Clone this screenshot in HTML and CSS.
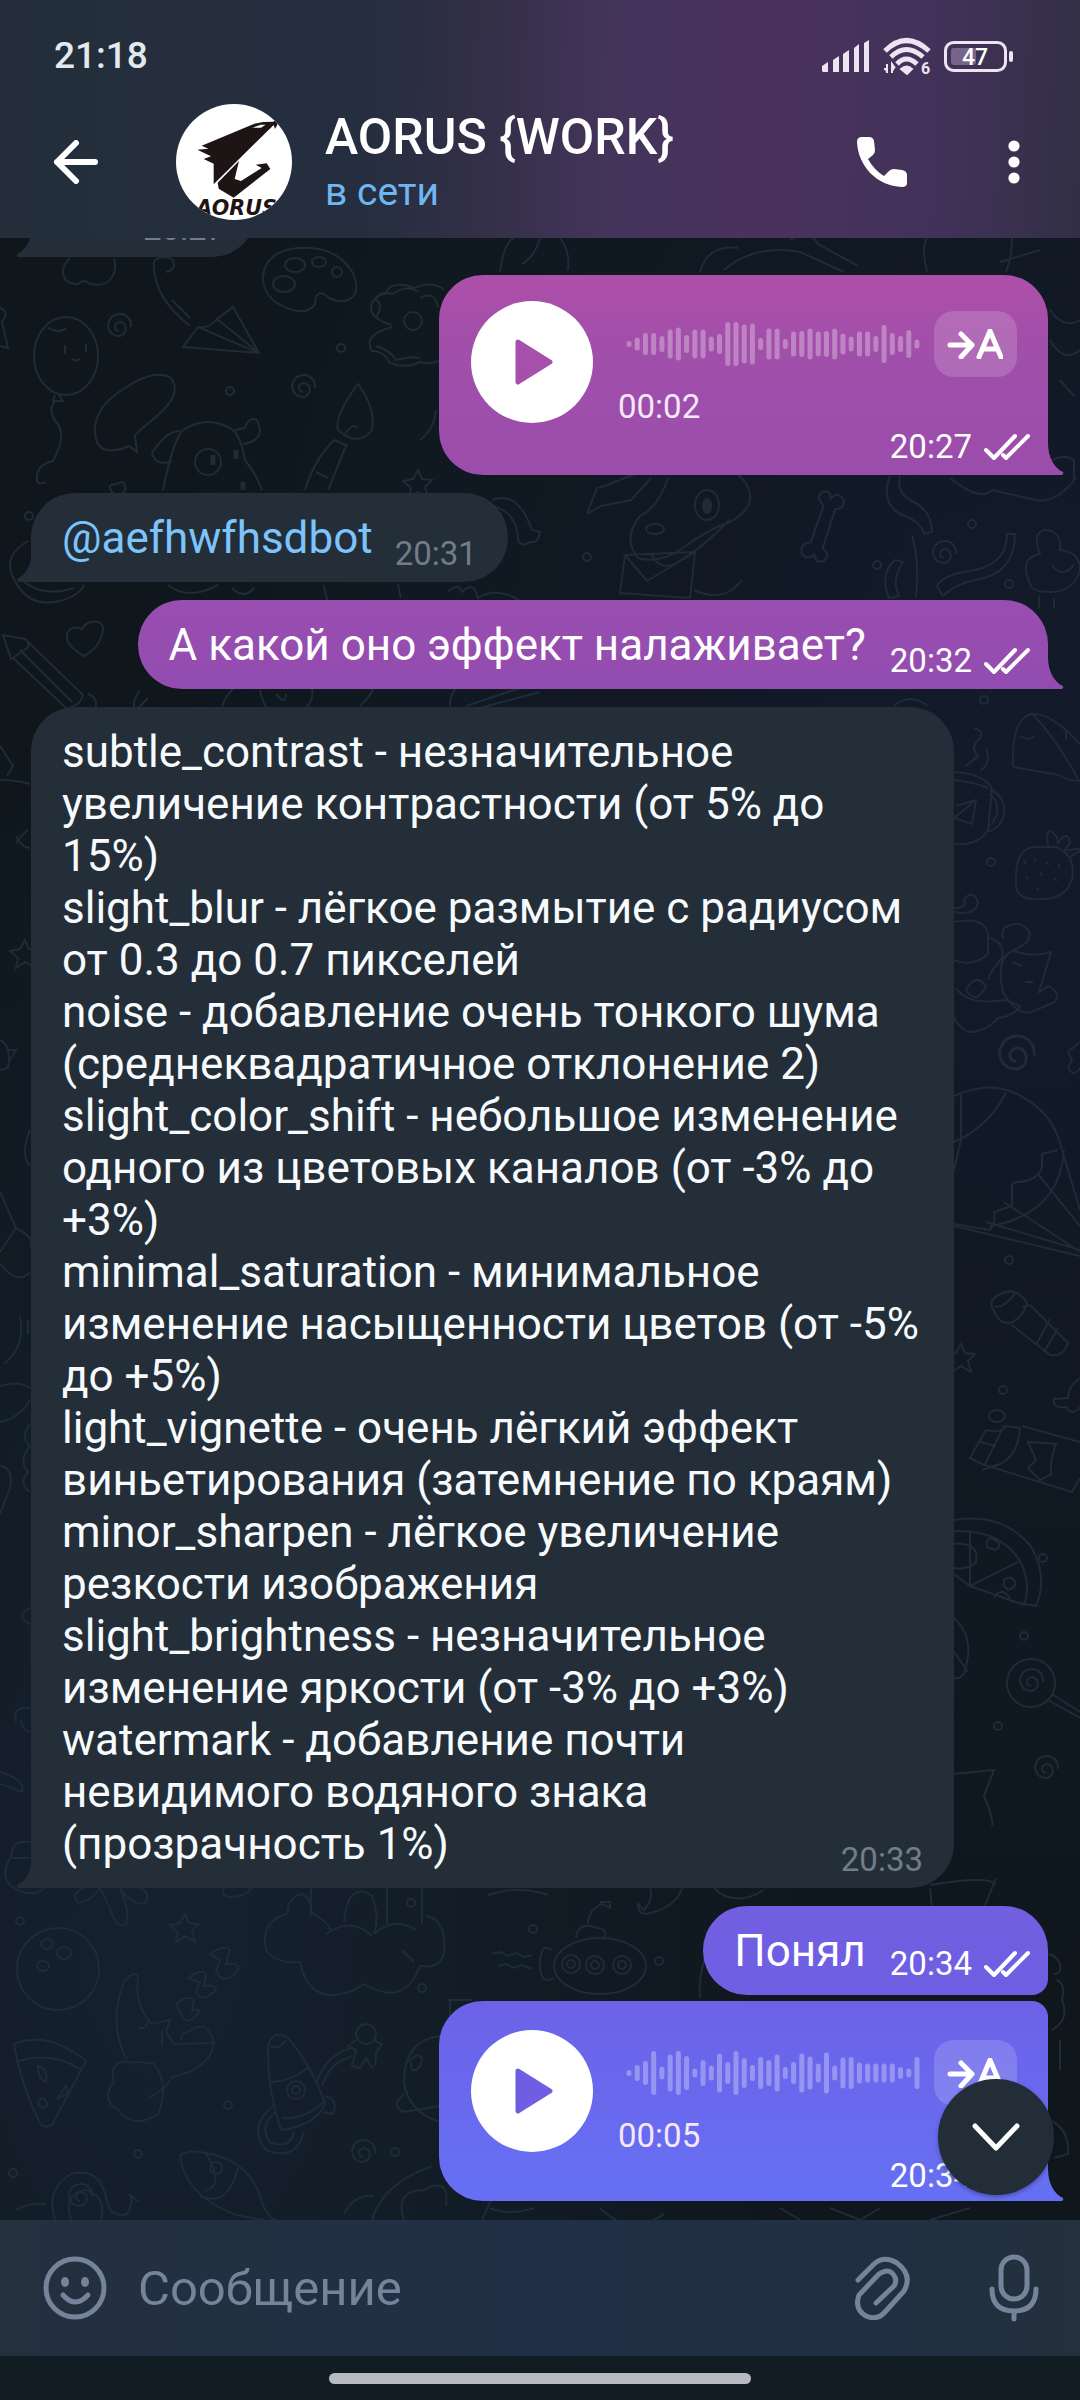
FILE: index.html
```html
<!DOCTYPE html>
<html lang="ru">
  <head>
    <meta charset="UTF-8" />
    <meta name="viewport" content="width=device-width, initial-scale=1.0" />
    <title>AORUS {WORK}</title>
    <link rel="stylesheet" href="styles.css">
  </head>
  <body>
    <header class="header">
      <!-- Status bar -->
      <div class="status">
        <span class="clock">21:18</span>
        <div class="indicators">
          <svg width="48" height="34" viewBox="0 0 48 34" fill="#ece4f0">
            <path d="M0 32v-5l6-4v10h-5zM11 33V21l6-4v16zM21 33V15l6-4v22zM32 33V9l5-4v28zM42 33V4l5-3v32z" />
          </svg>
          <svg width="48" height="38" viewBox="0 0 48 38">
            <g fill="none" stroke="#ece4f0" stroke-width="5">
              <path d="M2 14Q23-7 46 14" />
              <path d="M8 20Q23 5 40 20" />
              <path d="M14 27Q23 17 34 27" />
            </g>
            <path d="M18 32q6-5 11 0l-5 5zM4 27v9M1 32h3v4M9 36v-9l3 4" fill="#ece4f0" stroke="#ece4f0" stroke-width="2" />
            <text x="38" y="37" class="wifi-text">6</text>
          </svg>
          <svg width="70" height="32" viewBox="0 0 70 32">
            <rect x="1.5" y="2.500" width="60" height="28" rx="8" fill="none" stroke="#ece4f0" stroke-width="3" />
            <rect x="7" y="8" width="25" height="17" rx="3" fill="#76648a" />
            <rect x="65" y="11" width="4" height="11" rx="2" fill="#ece4f0" />
            <text x="31" y="25" class="battery-text">47</text>
          </svg>
        </div>
      </div>

      <!-- Chat toolbar -->
      <div class="toolbar">
        <button class="icon-btn" aria-label="Назад">
          <svg width="44" height="44" viewBox="0 0 44 44" fill="none" stroke="#fff" stroke-width="6" stroke-linecap="round" stroke-linejoin="round">
            <path d="M22 3L3 22l19 19M3 22h38" />
          </svg>
        </button>
        <svg class="avatar" viewBox="33 27 348 348">
          <rect x="33" y="27" width="348" height="348" fill="#fff" />
          <g fill="#1d1416">
            <path d="M110 152L268 86 294 81 324 80 335 75 337 89 330 102 326 90 217 197 146 268V206L116 192 138 184 97 164 130 161z" />
            <path d="M222 198L209 252 228 258 290 219 272 209 305 205 316 222 206 308 161 281 158 263z" />
          </g>
          <path d="M262 98l26-9h14l-14 9z" fill="#fff" />
          <text x="94" y="359" class="avatar-text">AORUS</text>
        </svg>
        <div class="peer">
          <h1>AORUS {WORK}</h1>
          <p>в сети</p>
        </div>
        <button class="icon-btn call" aria-label="Позвонить">
          <svg width="50" height="50" viewBox="0 0 50 50" fill="#fff">
            <path d="M5 0h7q4 0 5 4l1 9q0 3-2 5l-5 4q6 11 16 17l5-5q2-2 5-2l8 1q5 1 5 5v8q0 4-5 4C20 49 1 29 0 5Q0 0 5 0z" />
          </svg>
        </button>
        <button class="icon-btn" aria-label="Меню">
          <svg width="12" height="44" viewBox="0 0 12 44" fill="#fff">
            <circle cx="6" cy="6" r="5.600" /><circle cx="6" cy="22" r="5.600" /><circle cx="6" cy="38" r="5.600" />
          </svg>
        </button>
      </div>
    </header>

    <main class="chat">
      <!-- Wallpaper -->
      <svg class="wallpaper" viewBox="0 238 1080 1982" preserveAspectRatio="xMidYMin slice" aria-hidden="true">
        <defs>
          <path id="spiral" d="M0 3q-5-1-4-6 5-6 10 0 3 8-5 11-11 0-12-11 2-12 14-11 10 3 9 13" />
          <path id="star" d="M0-14l4 9 10 1-7 7 3 11-10-6-9 6 2-10-8-7 10-2z" />
          <circle id="dot" r="4" />
          <path id="bone" d="M-5-22q-10-6-4-13 8-4 9 5 6-9 13-2 4 9-6 11L3 20q9 4 4 12-8 5-11-4-6 8-13 1-3-10 7-12z" />
        </defs>
        <!-- top left -->
        <path d="M70 258c-12 12-8 26 8 26q6-6 12 0c20 4 28-10 24-26M0 308q10 4 2 14l6 26-8-2" />
        <ellipse cx="66" cy="356" rx="32" ry="39" />
        <path d="M48 328q12 6 18 0M65 345v9M86 344v8M72 359q4 3 8 0M55 395l-2 6h10l-4-6M55 401q-8 10 2 22t-4 38q-18 4-16 20q2 4 9 1" />
        <use href="#spiral" x="119" y="328" />
        <path d="M190 326q-38-30-36-64 6-8 18-3 6 10-6 13M172 300l18 18" />
        <path d="M198 327l-15 20 76 6-26-46-16 12q-8 10-19 8zM198 327l61 26-42-34" />
        <path d="M263 280c0-30 30-33 48-32 30 2 50 26 44 46q-8 12-26 4c-10-10-14-2-14 6q-6 10-22 6-28-8-30-30z" />
        <ellipse cx="295" cy="265" rx="10" ry="7" /><ellipse cx="319" cy="262" rx="7" ry="5" /><circle cx="337" cy="272" r="5" /><ellipse cx="284" cy="284" rx="11" ry="8" />
        <path d="M392 325c-30-8-24-28-6-32 4-12 20-8 28-5q20-8 30 2M376 318q8-14 0-18 4-10 16-6 16-10 26-2M392 327q-30 8-20 24 12 0 18 12 16 6 30-1 14 4 24-5M376 346q14 4 20 14 14-4 24-2" />
        <circle cx="413" cy="321" r="9" />
        <path d="M358 384q-24 32-20 46 20 18 34 0 4-22-14-46zM344 436q8-14 14-8M334 440l14 6M334 440q-20 20-29 50M346 446l-18 44M316 472l12 6" />
        <use href="#spiral" x="303" y="389" />
        <path d="M95 430q0-24 30-42 30-20 46-10 12 16-14 38-22 18-22 20l2 16-8-6q-34 14-34-16z" />
        <path d="M163 490q10-50 20-60 25-16 50 0 8 8 12 30 10 12 17 30M180 431q-14 0-28 22 4 14 20 8M235 430l10-2q4-12 12-8 10 20-14 24" />
        <circle cx="208" cy="462" r="13" /><path d="M213 455v10M236 450v9M243 490v-8" stroke-width="5" />
        <use href="#star" x="418" y="484" /><path d="M112 492q-6-8 5-8 6-5 8 2 2 6-7 10z" />
        <use href="#dot" x="230" y="391" /><use href="#dot" x="341" y="348" /><use href="#dot" x="29" y="516" />
        <!-- top right -->
        <path d="M500 272q4-30 14-34M560 238q10 12 8 32M700 272q8-28 38-24M724 270q30-26 76-18l44 20M790 240q20-12 28 4l40 22M927 272q-6-24 0-34M1000 262l40-12M1012 238q0 20 -6 34M540 238q-6 20-18 26" />
        <path d="M1050 310q14 20 30 10M1050 340q14 24 30 10M1060 380l14 16M420 298q16-8 18 10M420 440q14-10 16-30" />
        <!-- around the bot link -->
        <path d="M12 575q-8-20 16-34M12 575q14 34 48 26 20-6 24-16M22 580q20 18 52 8M168 585q20 16 50 0M232 588q12 12 22 0M324 585q4 30 16 16 8 14 30 0M398 584q4 20 2 10M448 592q10-10 14 0 12-12 16 6 20-12 44 4M492 500q26-10 40 30l8 2q-2 12-10 10-8 6-12-2 0-26-24-34" />
        <path d="M587 514l10-26 8-2 30-12M587 514l14-8 30-6 20-22" />
        <path d="M672 478q-10 30-28 38-18 22-2 42 20 6 42-8 26-20 50-28 36-20 8-48M655 554q10 20 30 6 24-14 48-40" transform="translate(-4 0)" />
        <ellipse cx="707" cy="505" rx="12" ry="15" /><ellipse cx="707" cy="506" rx="4" ry="7" class="filled" /><ellipse cx="655" cy="529" rx="9" ry="5" />
        <path d="M625 555l70-3-5 46-70-5zM625 555l22 26 48-29M694 590q30 14 48-10" />
        <use href="#bone" transform="translate(824 528) rotate(12)" />
        <path d="M890 476q-10 26 10 38 22 8 24 20l8-2q0-22-22-32-14-8-10-24M950 478q30 24 42 12l44 10q20 4 40-22M1040 470q20-20 34-10v20" />
        <path d="M895 560q-16 14-6 38l10-2q-8-16 4-34zM912 535q8 30 4 62M1007 534h8q0 40-40 46-20 4-32 16l-6-10q6-10 26-14 44-4 44-38z" />
        <use href="#spiral" x="944" y="555" />
        <path d="M1030 584q-12-26 10-30-8-20 4-24 18 0 16 20 20 2 20 20-6 22-30 22-18 0-20-8zM1052 565q10 14 22 0M1039 596v12M1054 598v10" />
        <use href="#dot" x="587" y="557" /><use href="#dot" x="972" y="524" /><use href="#dot" x="877" y="565" /><use href="#dot" x="1009" y="584" />
        <!-- pencil and heart -->
        <path d="M3 635l22 4q8 6-2 12l-12 8zM25 639l58 56q-2 10-16 14L13 658M20 650l52 52M88 694q12 4 6 18M84 656c-30-16-14-34-2-27 4-10 26-12 20 6q-4 14-18 21z" />
        <path d="M140 690q-10 14-4 20l12-12M222 706q6-14 14-20M260 690q4 26 26 26 30-4 26-30M276 694q10 12 10 0M360 706q20-20 8-18M450 706q0-16 10-20M466 706l60-20M480 708l60-16" />
        <path d="M0 746l13 20-6 10M0 780q16 0 30 4M16 836q6 12 14 12M28 830q-8 6-12 14" />
        <!-- right column -->
        <path d="M894 706q16-14 34 0M974 728q12 4 4 12t0 16l-12 10M986 749q6 14-6 22M954 772q30 2 38 16l-4 42q-10 16-34 14M954 780q20 2 34 8M990 789q16 8 14 26-6 16-16 16M989 794q10 6 8 20-4 10-8 12M956 806l20-6-4 24-18-6 22-18" />
        <path d="M1013 766q-2-46 18-52 20-2 49 30M1033 715q24 24 46 66-10 0-20-6l-46-8M1020 736q8 6 14 0M1066 730v10" />
        <path d="M1016 885q-2-36 18-38h22q20 8 16 32-6 20-30 20-26 2-26-14zM1048 845q-2-14 2-14 8 4 8 12 10-14 12 0l-6 8q20-4 16 0l-10 6M1024 860l2 4M1034 858l2 3M1046 862l3 3M1058 864l2 4M1026 876l2 3M1040 872l2 4M1054 878l3 3M1036 888l3 2" />
        <path d="M954 908q14 0 10-8 8-12 14 2-2 14-24 10M954 922q30-6 34 12v20q-16 14-34 6M990 938q16 6 12 20-12 14-14 22M1003 938q-4-14 16-14 16 6 8 18l-12 8q-20 6-12 42 14 24 28 20l24-10q6-8-6-16l-10 6 12-40q-22 6-38-2M1012 962l10 4M1025 982h8M956 988q12 18 50 12l14 6q-6 10-22 12-12 14-30 14-18-10-14-26M966 990q10-18 20-4-10 20-20 4z" />
        <use href="#spiral" transform="translate(1016 1057) scale(1.5)" />
        <path d="M1080 1042l-12 10 4 8-4 8q6 10 12 0" />
        <path d="M954 1096q40-18 70 2 30 16 38 52l18 60M954 1142q36-16 52-50M961 1094v46l-7 30M1058 1150l-16 4v14q-6 14-26 14l-4 2v22l-18 6q2 10-4 18l-36-6M954 1226q50 12 126 30M990 1226q70-12 74-76M1038 1174l42 52M1004 1202l76 50M986 1222l94 28" />
        <path d="M993 1309q-6-10 10-16 14-6 24 10-4 14-16 20-12 2-18-14zM995 1306q6 4 20-12M1012 1325l38 30q14 2 18-12l-38-38-8 2M1036 1345l14-26M1044 1352l14-24" />
        <use href="#star" x="961" y="1358" /><path d="M1080 1378q-12 8-12 20l-14 1q-2 10 12 8 6 10 14 0" />
        <ellipse cx="997" cy="1416" rx="8" ry="6" />
        <path d="M986 1430l-16 28 12 6 90 28 8-14M1022 1426l58 16M986 1430q14 4 20-4l14 2q-2 28-20 36l-18 6M1028 1442l28 2q-8 24-4 30l-12 6-12-12 8-8zM980 1442l16 4M1004 1426l-20 40" />
        <path d="M954 1520q50-8 78 28 16 30 4 58l-16-3M954 1531q46-2 66 30 12 24 4 44l-54-19-16-12M970 1530v56l48-24M954 1544q26-2 22 18-8 8-22 6M988 1548q-4-8 4-10 12 6 4 12zM1004 1586q-2-10 8-8 8 8-4 12zM994 1598q8-14 18 4" />
        <path d="M954 1618q20 18 12 48-2 14-12 12M954 1652l14 20" />
        <circle cx="1031" cy="1683" r="24" /><use href="#spiral" x="1031" y="1683" /><path d="M1048 1700l32 18M1052 1694l28 18" />
        <use href="#spiral" x="1046" y="1770" /><path d="M954 1774l40-4-10 26q10 24 8 30M930 1885q60-10 66 0" />
        <use href="#dot" x="984" y="700" /><use href="#dot" x="991" y="862" /><use href="#dot" x="1009" y="1260" /><use href="#dot" x="1003" y="1390" /><use href="#dot" x="1043" y="1558" /><use href="#dot" x="1024" y="1636" /><use href="#dot" x="998" y="1726" />
        <!-- left column -->
        <use href="#star" x="25" y="954" /><path d="M0 1040q12 6 8 28l-8 2M8 1050h8l-6 10M30 1130q-10 24 0 36M0 1192l16 36-16 24M16 1228q20 10 14 20M0 1264q18 22 30 8M20 1316q6 30-16 48M28 1320v14M0 1386q18-6 30 2M0 1422q20-4 30-22M30 1424q-10 14 0 22-12 14-2 26-10 12 2 20M0 1466q14 2 10 22l-10 26M30 1608q-16 8 0 16M16 1722q-4-16 14-14M20 1720q4 12 10 12M0 1772q26 8 22 20l-22-8M30 1842q-18-2-18 12-18 30 12 38 14 4 20-4M12 1858h18" />
        <!-- bottom left -->
        <path d="M84 1888q-14 6-6 14 10 2 22-14l10 20q6 22 16 16 4-14-6-36 14 20 26 14 4-10-6-14M224 1888q-4 8 6 9 14 0 22-9" />
        <use href="#star" x="185" y="1928" /><use href="#dot" x="20" y="1921" />
        <circle cx="58" cy="1969" r="41" /><ellipse cx="47" cy="1944" rx="6" ry="5" /><ellipse cx="64" cy="1953" rx="7" ry="6" /><ellipse cx="43" cy="1966" rx="6" ry="5" />
        <path d="M14 2044q34-14 72 17l-34 64q-8 4-12-2-20-40-26-79zM16 2062q34-12 66 8M38 2066q10 2 8 16-8-2-8-16zM58 2098l8-12 2 8zM38 2104q4-12 9 0-2 8-9 0z" />
        <path d="M138 1976q-4-6-14 6-16 40 2 76M138 1976q-4 30 14 48l18-4-4 12 8 12 40-1q-4 26-42 34-8 14-22 20M162 2046v-16M138 2026q6 6 10-4M182 2040q-2-6 6-8 16-12 22 2 6 6 0 10M130 2062q-22-2-16 20-14 16 4 28 16 20 40 4 12-30-4-50-22-4-24 0" />
        <path d="M210 1954q14-10 20-4l-4 14q14-2 12 6-14 16-22 2l4-12zM188 1978q14-10 18-4l-2 12q12-2 12 4-14 14-20 2l4-10zM176 2004q12-10 18-4l-2 10q10-2 6 4-12 12-16 2z" />
        <path d="M286 1914q-26 8-20 36 10 14 34 12 10 46 54 28l10-6q40 24 56-18 28 4 24-26-2-22-18-24M288 1914q-2-16 14-20 10 4 9 18 14 8 20 18M311 1888v28M344 1922q4-42 28-26 8 20 2 38M326 1934q26-18 46 2M374 1934q20-18 42-4M387 1888v36M422 1888v36M402 1950l12 12" />
        <use href="#dot" x="411" y="1903" /><use href="#dot" x="422" y="1988" /><use href="#dot" x="228" y="2105" /><use href="#dot" x="138" y="2154" /><use href="#dot" x="13" y="2173" /><use href="#dot" x="395" y="2152" />
        <path d="M268 2046q6-18 20-8 24 28 37 66-10 22-44 26-14-40-13-84zM270 2046q10 4 16-6M270 2082q20 0 38-14M282 2118q22 2 42-16M325 2096q14 4 8 18l-10-2" />
        <circle cx="296" cy="2090" r="9" /><circle cx="296" cy="2090" r="4" /><path d="M276 2104q-30 22-10 46 30 12 38-18M276 2112q-18 14-6 30 20 8 24-10M316 2084q10-30 36-36M322 2086q6-22 30-30" />
        <circle cx="366" cy="2034" r="10" /><path d="M356 2040l-8 6 8 4-4 16 8 2 6-10 6 10q4 0 4-16l6-8-8-4" />
        <path d="M440 2036q-36 4-36 46 4 30 36 40M410 2060q8-8 12-2-2 14-10 12zM404 2094q-14 12 0 18l36-6M450 2000v16M448 2000h24" />
        <use href="#spiral" x="363" y="2154" />
        <path d="M16 2210q14-8 30-6M55 2220q-10-30 16-46 30-8 36 28 4 16 20 12 8-14 2-20l10 8M71 2220q-8-26 14-30 22 6 16 30" /><use href="#spiral" x="80" y="2198" />
        <path d="M180 2155q12-6 26-2 46 8 56 50 8 18 16 18M180 2155q4 40 56 60l28 5M206 2153q20 34-2 38M238 2168q-10 40-38 28" /><circle cx="216" cy="2168" r="6" />
        <path d="M372 2220q10-36 60-54M344 2214q10-20 30-18M404 2220q-10-30 20-30 26-14 22 16M482 2220l10-22" />
        <!-- submarine -->
        <ellipse cx="600" cy="1966" rx="46" ry="28" /><circle cx="571" cy="1964" r="9" /><circle cx="595" cy="1965" r="9" /><circle cx="622" cy="1965" r="9" /><circle cx="571" cy="1964" r="4" /><circle cx="595" cy="1965" r="4" /><circle cx="622" cy="1965" r="4" />
        <path d="M576 1938q2-14 14-12l8 2q10 0 6 12M588 1924q0-14 14-20l8 4v-6l-10 0M552 1950q-12-8-12 14t14 14M492 1954l8-2 8 4 8-3 8 4 8-2M498 1966l8-2 8 4 8-3 10 4" />
        <use href="#dot" x="533" y="1929" /><use href="#dot" x="659" y="1961" />
        <path d="M488 1895q30-10 60 0M650 1888q4 10-6 22l-6-6q0 10 8 10 30-6 36-26M714 1888q20 20 50 2M930 1888l6 60q20 0 40-20l20-50M1036 1958q16-10 24 6 2 10-6 10M1056 1980q10 2 6 20 8 20-10 30M700 1998q-2-30 10-50" />
        <path d="M490 2208q20 8 44 0M600 2208q30 30 64 6M780 2208l20 12M830 2208l30 12 20-12M930 2220l40-12M1050 2120q20 10 18 34l-14 4M1060 2040v30" />
      </svg>

      <div class="messages">
        <div class="msg in">
          <span class="meta">20:27</span>
          <svg class="tail" width="16" height="32" viewBox="0 0 16 32"><path d="M0 0C0 14 6 25 15 29q1 2-1 3H0z" /></svg>
        </div>

        <div class="msg out voice pink">
          <div class="player">
            <button class="play" aria-label="Слушать">
              <svg width="40" height="48" viewBox="0 0 40 48"><path d="M4 4l32 20L4 44z" stroke-width="5" stroke-linejoin="round" /></svg>
            </button>
            <div class="track">
              <svg class="wave" width="294" height="66" viewBox="0 0 294 66" data-bars="6,13,22,22,16,29,33,18,29,29,15,20,44,44,39,41,12,31,31,10,25,26,31,25,26,31,21,15,25,25,16,38,22,16,28,9"></svg>
              <span class="duration">00:02</span>
            </div>
            <button class="transcribe" aria-label="Расшифровать">
              <svg width="56" height="30" viewBox="0 0 56 30"><path d="M3 16h22M14 5l11 11-11 12M32 28L43 2l11 26M36 20h14" /></svg>
            </button>
          </div>
          <span class="meta">20:27 <svg class="checks" width="46" height="28" viewBox="0 0 46 28"><path d="M2 17l8 8L31 3M19 22l3 3L44 3" /></svg></span>
          <svg class="tail" width="16" height="32" viewBox="0 0 16 32"><path d="M0 0C0 14 6 25 15 29q1 2-1 3H0z" /></svg>
        </div>

        <div class="msg in">
          <p><a href="#">@aefhwfhsdbot</a></p>
          <span class="meta">20:31</span>
          <svg class="tail" width="16" height="32" viewBox="0 0 16 32"><path d="M0 0C0 14 6 25 15 29q1 2-1 3H0z" /></svg>
        </div>

        <div class="msg out violet">
          <p>А какой оно эффект налаживает?</p>
          <span class="meta">20:32 <svg class="checks" width="46" height="28" viewBox="0 0 46 28"><path d="M2 17l8 8L31 3M19 22l3 3L44 3" /></svg></span>
          <svg class="tail" width="16" height="32" viewBox="0 0 16 32"><path d="M0 0C0 14 6 25 15 29q1 2-1 3H0z" /></svg>
        </div>

        <div class="msg in long">
          <p>
            subtle_contrast - незначительное увеличение контрастности (от 5% до 15%)<br />
            slight_blur - лёгкое размытие с радиусом от 0.3 до 0.7 пикселей<br />
            noise - добавление очень тонкого шума (среднеквадратичное отклонение 2)<br />
            slight_color_shift - небольшое изменение одного из цветовых каналов (от -3% до +3%)<br />
            minimal_saturation - минимальное изменение насыщенности цветов (от -5% до +5%)<br />
            light_vignette - очень лёгкий эффект виньетирования (затемнение по краям)<br />
            minor_sharpen - лёгкое увеличение резкости изображения<br />
            slight_brightness - незначительное изменение яркости (от -3% до +3%)<br />
            watermark - добавление почти невидимого водяного знака (прозрачность 1%)
          </p>
          <span class="meta">20:33</span>
          <svg class="tail" width="16" height="32" viewBox="0 0 16 32"><path d="M0 0C0 14 6 25 15 29q1 2-1 3H0z" /></svg>
        </div>

        <div class="msg out indigo first">
          <p>Понял</p>
          <span class="meta">20:34 <svg class="checks" width="46" height="28" viewBox="0 0 46 28"><path d="M2 17l8 8L31 3M19 22l3 3L44 3" /></svg></span>
        </div>

        <div class="msg out voice blue last">
          <div class="player">
            <button class="play" aria-label="Слушать">
              <svg width="40" height="48" viewBox="0 0 40 48"><path d="M4 4l32 20L4 44z" stroke-width="5" stroke-linejoin="round" /></svg>
            </button>
            <div class="track">
              <svg class="wave" width="294" height="66" viewBox="0 0 294 66" data-bars="6,16,24,44,13,37,44,34,9,26,15,39,22,44,30,16,32,26,37,12,22,39,33,19,41,15,31,32,21,19,19,19,19,12,9,32"></svg>
              <span class="duration">00:05</span>
            </div>
            <button class="transcribe" aria-label="Расшифровать">
              <svg width="56" height="30" viewBox="0 0 56 30"><path d="M3 16h22M14 5l11 11-11 12M32 28L43 2l11 26M36 20h14" /></svg>
            </button>
          </div>
          <span class="meta">20:34 <svg class="checks" width="46" height="28" viewBox="0 0 46 28"><path d="M2 17l8 8L31 3M19 22l3 3L44 3" /></svg></span>
          <svg class="tail" width="16" height="32" viewBox="0 0 16 32"><path d="M0 0C0 14 6 25 15 29q1 2-1 3H0z" /></svg>
        </div>
      </div>

      <button class="scroll-down" aria-label="Вниз">
        <svg width="48" height="30" viewBox="0 0 48 30" fill="none" stroke="#fff" stroke-width="5" stroke-linecap="round" stroke-linejoin="round"><path d="M3 4l21 22L45 4" /></svg>
      </button>
    </main>

    <!-- Message input -->
    <form class="composer">
      <button type="button" class="icon-btn" aria-label="Эмодзи">
        <svg width="64" height="64" viewBox="0 0 64 64" fill="none" stroke="#75849a" stroke-width="5" stroke-linecap="round">
          <circle cx="32" cy="32" r="29" />
          <path d="M20 39q12 14 25 0" />
          <g fill="#75849a" stroke="none"><ellipse cx="22" cy="26" rx="4" ry="5" /><ellipse cx="42" cy="26" rx="4" ry="5" /></g>
        </svg>
      </button>
      <input type="text" placeholder="Сообщение" aria-label="Сообщение" />
      <button type="button" class="icon-btn" aria-label="Прикрепить">
        <svg width="56" height="64" viewBox="0 0 56 64" fill="none" stroke="#75849a" stroke-width="5" stroke-linecap="round">
          <path d="M3 24L19 8Q29-1 42 7q16 12 7 28L30 56q-8 9-19 4-12-7-7-21L24 18q9-6 14 0 5 6 1 12L21 47" />
        </svg>
      </button>
      <button type="button" class="icon-btn mic" aria-label="Голосовое сообщение">
        <svg width="50" height="68" viewBox="0 0 50 68" fill="none" stroke="#75849a" stroke-width="5" stroke-linecap="round">
          <rect x="12" y="3" width="26" height="42" rx="13" />
          <path d="M3 35q0 22 22 22t22-22M25 57v8" />
        </svg>
      </button>
    </form>

    <footer class="navbar"><div class="handle"></div></footer>

    <script>
      // draw voice message bars
      document.querySelectorAll(".wave").forEach(function (wave) {
        const bars = wave.dataset.bars.split(",").map(Number);
        const step = (294 - 6) / (bars.length - 1);
        let d = "";

        bars.forEach(function (height, i) {
          const line = Math.max(height - 5, 1);
          d += "M" + (3 + i * step) + " " + (33 - line / 2) + "v" + line;
        });

        const path = document.createElementNS("http://www.w3.org/2000/svg", "path");
        path.setAttribute("d", d);
        wave.appendChild(path);
      });
    </script>
  </body>
</html>
```
FILE: styles.css
```css
* {
  margin: 0;
  padding: 0;
  box-sizing: border-box;
}

body {
  font-family: Roboto, "Noto Sans", sans-serif;
  height: 100vh;
  display: flex;
  flex-direction: column;
  background-color: #111c23;
  color: #fff;
  overflow: hidden;
}

button {
  border: none;
  background: none;
  cursor: pointer;
}

svg {
  display: block;
  flex: none;
}

/* header */
.header {
  background: linear-gradient(
    92deg,
    #232e3a 0%,
    #252e3f 34%,
    #322f46 44%,
    #43345a 56%,
    #4a325d 70%,
    #42325a 86%,
    #322f45 100%
  );
}

.status {
  height: 85px;
  padding: 26px 66px 0 54px;
  display: flex;
  justify-content: space-between;
  align-items: center;
}

.clock {
  font-size: 37px;
  font-weight: 500;
  color: #e3eaee;
}

.indicators {
  display: flex;
  align-items: center;
  gap: 13px;
}

.wifi-text {
  font-size: 16px;
  font-weight: 700;
  fill: #ece4f0;
}

.battery-text {
  font-size: 23px;
  font-weight: 500;
  text-anchor: middle;
  fill: #fff;
}

.toolbar {
  height: 153px;
  padding: 0 60px 0 54px;
  display: flex;
  align-items: center;
}

.icon-btn {
  flex: none;
}

.avatar {
  width: 116px;
  height: 116px;
  margin: 0 33px 0 78px;
  border-radius: 50%;
}

.avatar-text {
  font-family: "DejaVu Sans", sans-serif;
  font-size: 62px;
  font-weight: 700;
  font-style: italic;
  fill: #1d1416;
}

.peer {
  flex: 1;
  min-width: 0;
}

.peer h1 {
  font-size: 50px;
  font-weight: 500;
  line-height: 60px;
}

.peer p {
  font-size: 39px;
  line-height: 50px;
  color: #6fb6f2;
}

.call {
  margin-right: 101px;
}

/* chat */
.chat {
  position: relative;
  flex: 1;
  min-height: 0;
  overflow: hidden;
  display: flex;
  flex-direction: column;
  justify-content: flex-end;
  background:
    radial-gradient(ellipse at 95% 28%, #131a2a 0%, transparent 60%),
    radial-gradient(ellipse at 15% 85%, #15212f 0%, transparent 50%),
    #0f171d;
}

.wallpaper {
  position: absolute;
  top: 0;
  left: 0;
  width: 100%;
  fill: none;
  stroke: #1f2b37;
  stroke-width: 2;
}

.wallpaper .filled {
  fill: #1f2b37;
}

.messages {
  position: relative;
  display: flex;
  flex-direction: column;
  gap: 18px;
  padding: 0 32px 19px 31px;
}

.msg {
  position: relative;
  display: flex;
  gap: 24px;
  padding: 19px 31px 18px;
  border-radius: 44px;
  font-size: 44px;
  line-height: 52px;
}

.msg.in {
  align-self: flex-start;
  background-color: #232e39;
  color: #f7fafc;
  gap: 22px;
  border-bottom-left-radius: 0;
}

.msg.out {
  align-self: flex-end;
  padding-right: 18px;
  border-bottom-right-radius: 0;
}

.msg:first-child {
  padding-left: 112px;
  min-height: 89px;
}

.msg a {
  color: #7cc4fb;
  text-decoration: none;
}

.meta {
  align-self: flex-end;
  display: flex;
  align-items: center;
  gap: 12px;
  margin-bottom: -10px;
  font-size: 33px;
  line-height: 40px;
}

.in .meta {
  color: #717d88;
}

.checks {
  fill: none;
  stroke: #fff;
  stroke-width: 4;
  stroke-linecap: round;
  stroke-linejoin: round;
}

.tail {
  position: absolute;
  right: -16px;
  bottom: 0;
}

.in .tail {
  right: auto;
  left: -15px;
  transform: scaleX(-1);
  fill: #232e39;
}

/* long text keeps its time over the last line */
.msg.long {
  display: grid;
  width: 923px;
  max-width: 92%;
}

.long p,
.long .meta {
  grid-area: 1 / 1;
}

.long .meta {
  justify-self: end;
}

.pink {
  background: linear-gradient(#ad4fa9, #a04faa 40%, #9b4dac);
  --tail: #9b4dac;
  --play: #a64fab;
}

.violet {
  background: linear-gradient(#994eb0, #924caf);
  --tail: #924caf;
}

.indigo {
  background: linear-gradient(#735ee0, #6d5fe3);
}

.blue {
  background: linear-gradient(#6c62e7, #6670f4);
  --tail: #6670f4;
  --play: #6f5ee2;
}

.out .tail {
  fill: var(--tail);
}

.msg.first {
  border-bottom-right-radius: 16px;
}

.first .meta {
  margin-bottom: -7px;
}

.msg.last {
  margin-top: -12px;
  border-top-right-radius: 16px;
}

/* voice messages */
.msg.voice {
  flex-direction: column;
  gap: 0;
  padding: 26px 18px 8px 32px;
}

.msg.voice.last {
  padding-top: 29px;
  padding-bottom: 5px;
}

.voice .meta {
  margin-bottom: 0;
}

.player {
  display: flex;
  align-items: flex-start;
}

.play {
  width: 122px;
  height: 122px;
  padding-left: 43px;
  border-radius: 50%;
  background-color: #fff;
}

.play svg {
  fill: var(--play);
  stroke: var(--play);
}

.track {
  display: flex;
  flex-direction: column;
  gap: 10px;
  padding: 10px 14px 0 25px;
}

.wave {
  margin-left: 8px;
  fill: none;
  stroke: rgba(255, 255, 255, 0.3);
  stroke-width: 5;
  stroke-linecap: round;
}

.duration {
  font-size: 33px;
  line-height: 40px;
  color: #f6e8fa;
}

.transcribe {
  width: 83px;
  height: 66px;
  margin: 10px 13px 0 0;
  padding-left: 13px;
  border-radius: 20px;
  background-color: rgba(255, 255, 255, 0.16);
}

.transcribe svg {
  fill: none;
  stroke: #fff;
  stroke-width: 5;
  stroke-linecap: round;
  stroke-linejoin: round;
}

.scroll-down {
  position: absolute;
  right: 26px;
  bottom: 25px;
  width: 116px;
  height: 116px;
  display: flex;
  justify-content: center;
  align-items: center;
  border-radius: 50%;
  background-color: #222d38;
  box-shadow: 0 2px 4px rgba(0, 0, 0, 0.3);
}

/* input */
.composer {
  height: 136px;
  padding: 0 41px 0 43px;
  display: flex;
  align-items: center;
  background: linear-gradient(90deg, #24303e, #212f46 50%, #212f43 80%, #24303d);
}

.composer input {
  flex: 1;
  min-width: 0;
  height: 60px;
  margin: 0 31px;
  border: none;
  outline: none;
  background: none;
  font-family: inherit;
  font-size: 49px;
  color: #fff;
}

.composer input::placeholder {
  color: #75849a;
}

.mic {
  margin-left: 78px;
}

.navbar {
  height: 44px;
  display: flex;
  justify-content: center;
  align-items: center;
}

.handle {
  width: 39%;
  height: 11px;
  border-radius: 6px;
  background-color: #b5bbc1;
}
```
